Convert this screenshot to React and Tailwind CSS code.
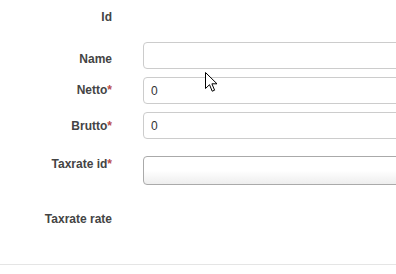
import React from 'react';

function Label({ text, required, className = '' }) {
  return (
    <div className={`w-[112px] shrink-0 text-right text-[12px] leading-[16px] font-bold text-[#444] ${className}`}>
      {text}
      {required && <span className="text-[#b94a48]">*</span>}
    </div>
  );
}

function Field({ value }) {
  return (
    <input
      readOnly
      value={value}
      className="ml-[31px] h-[27px] w-[300px] shrink-0 rounded-[4px] border border-[#cccccc] bg-white pl-[7px] text-[12px] text-[#333] outline-none"
    />
  );
}

export default function App() {
  return (
    <div className="relative h-[274px] w-[396px] overflow-hidden bg-white font-['Liberation_Sans',Arial,sans-serif]">
      <div className="flex flex-col pt-[9px]">
        {/* Id */}
        <div className="flex h-[33px]">
          <Label text="Id" />
        </div>

        {/* Name */}
        <div className="flex h-[35px] items-start">
          <Label text="Name" className="pt-[9px]" />
          <Field value="" />
        </div>

        {/* Netto */}
        <div className="flex h-[35px] items-start">
          <Label text="Netto" required className="pt-[5px]" />
          <Field value="0" />
        </div>

        {/* Brutto */}
        <div className="flex h-[44px] items-start">
          <Label text="Brutto" required className="pt-[6px]" />
          <Field value="0" />
        </div>

        {/* Taxrate id */}
        <div className="flex h-[55px] items-start">
          <Label text="Taxrate id" required />
          <div className="ml-[31px] h-[29px] w-[300px] shrink-0 rounded-[4px] border border-[#aaaaaa] bg-gradient-to-b from-white from-50% to-[#eeeeee]" />
        </div>

        {/* Taxrate rate */}
        <div className="flex h-[53px]">
          <Label text="Taxrate rate" />
        </div>

        <div className="border-t border-[#e5e5e5]" />
      </div>

      {/* mouse pointer */}
      <svg className="absolute left-[205px] top-[72px]" width="13" height="21" viewBox="0 0 13 21">
        <path
          d="M0.5 0.5 L0.5 16.5 L4.5 12.7 L7.2 19.2 L9.6 18.2 L6.9 11.8 L12 11.8 Z"
          fill="white"
          stroke="black"
          strokeWidth="1"
          strokeLinejoin="miter"
        />
      </svg>
    </div>
  );
}
